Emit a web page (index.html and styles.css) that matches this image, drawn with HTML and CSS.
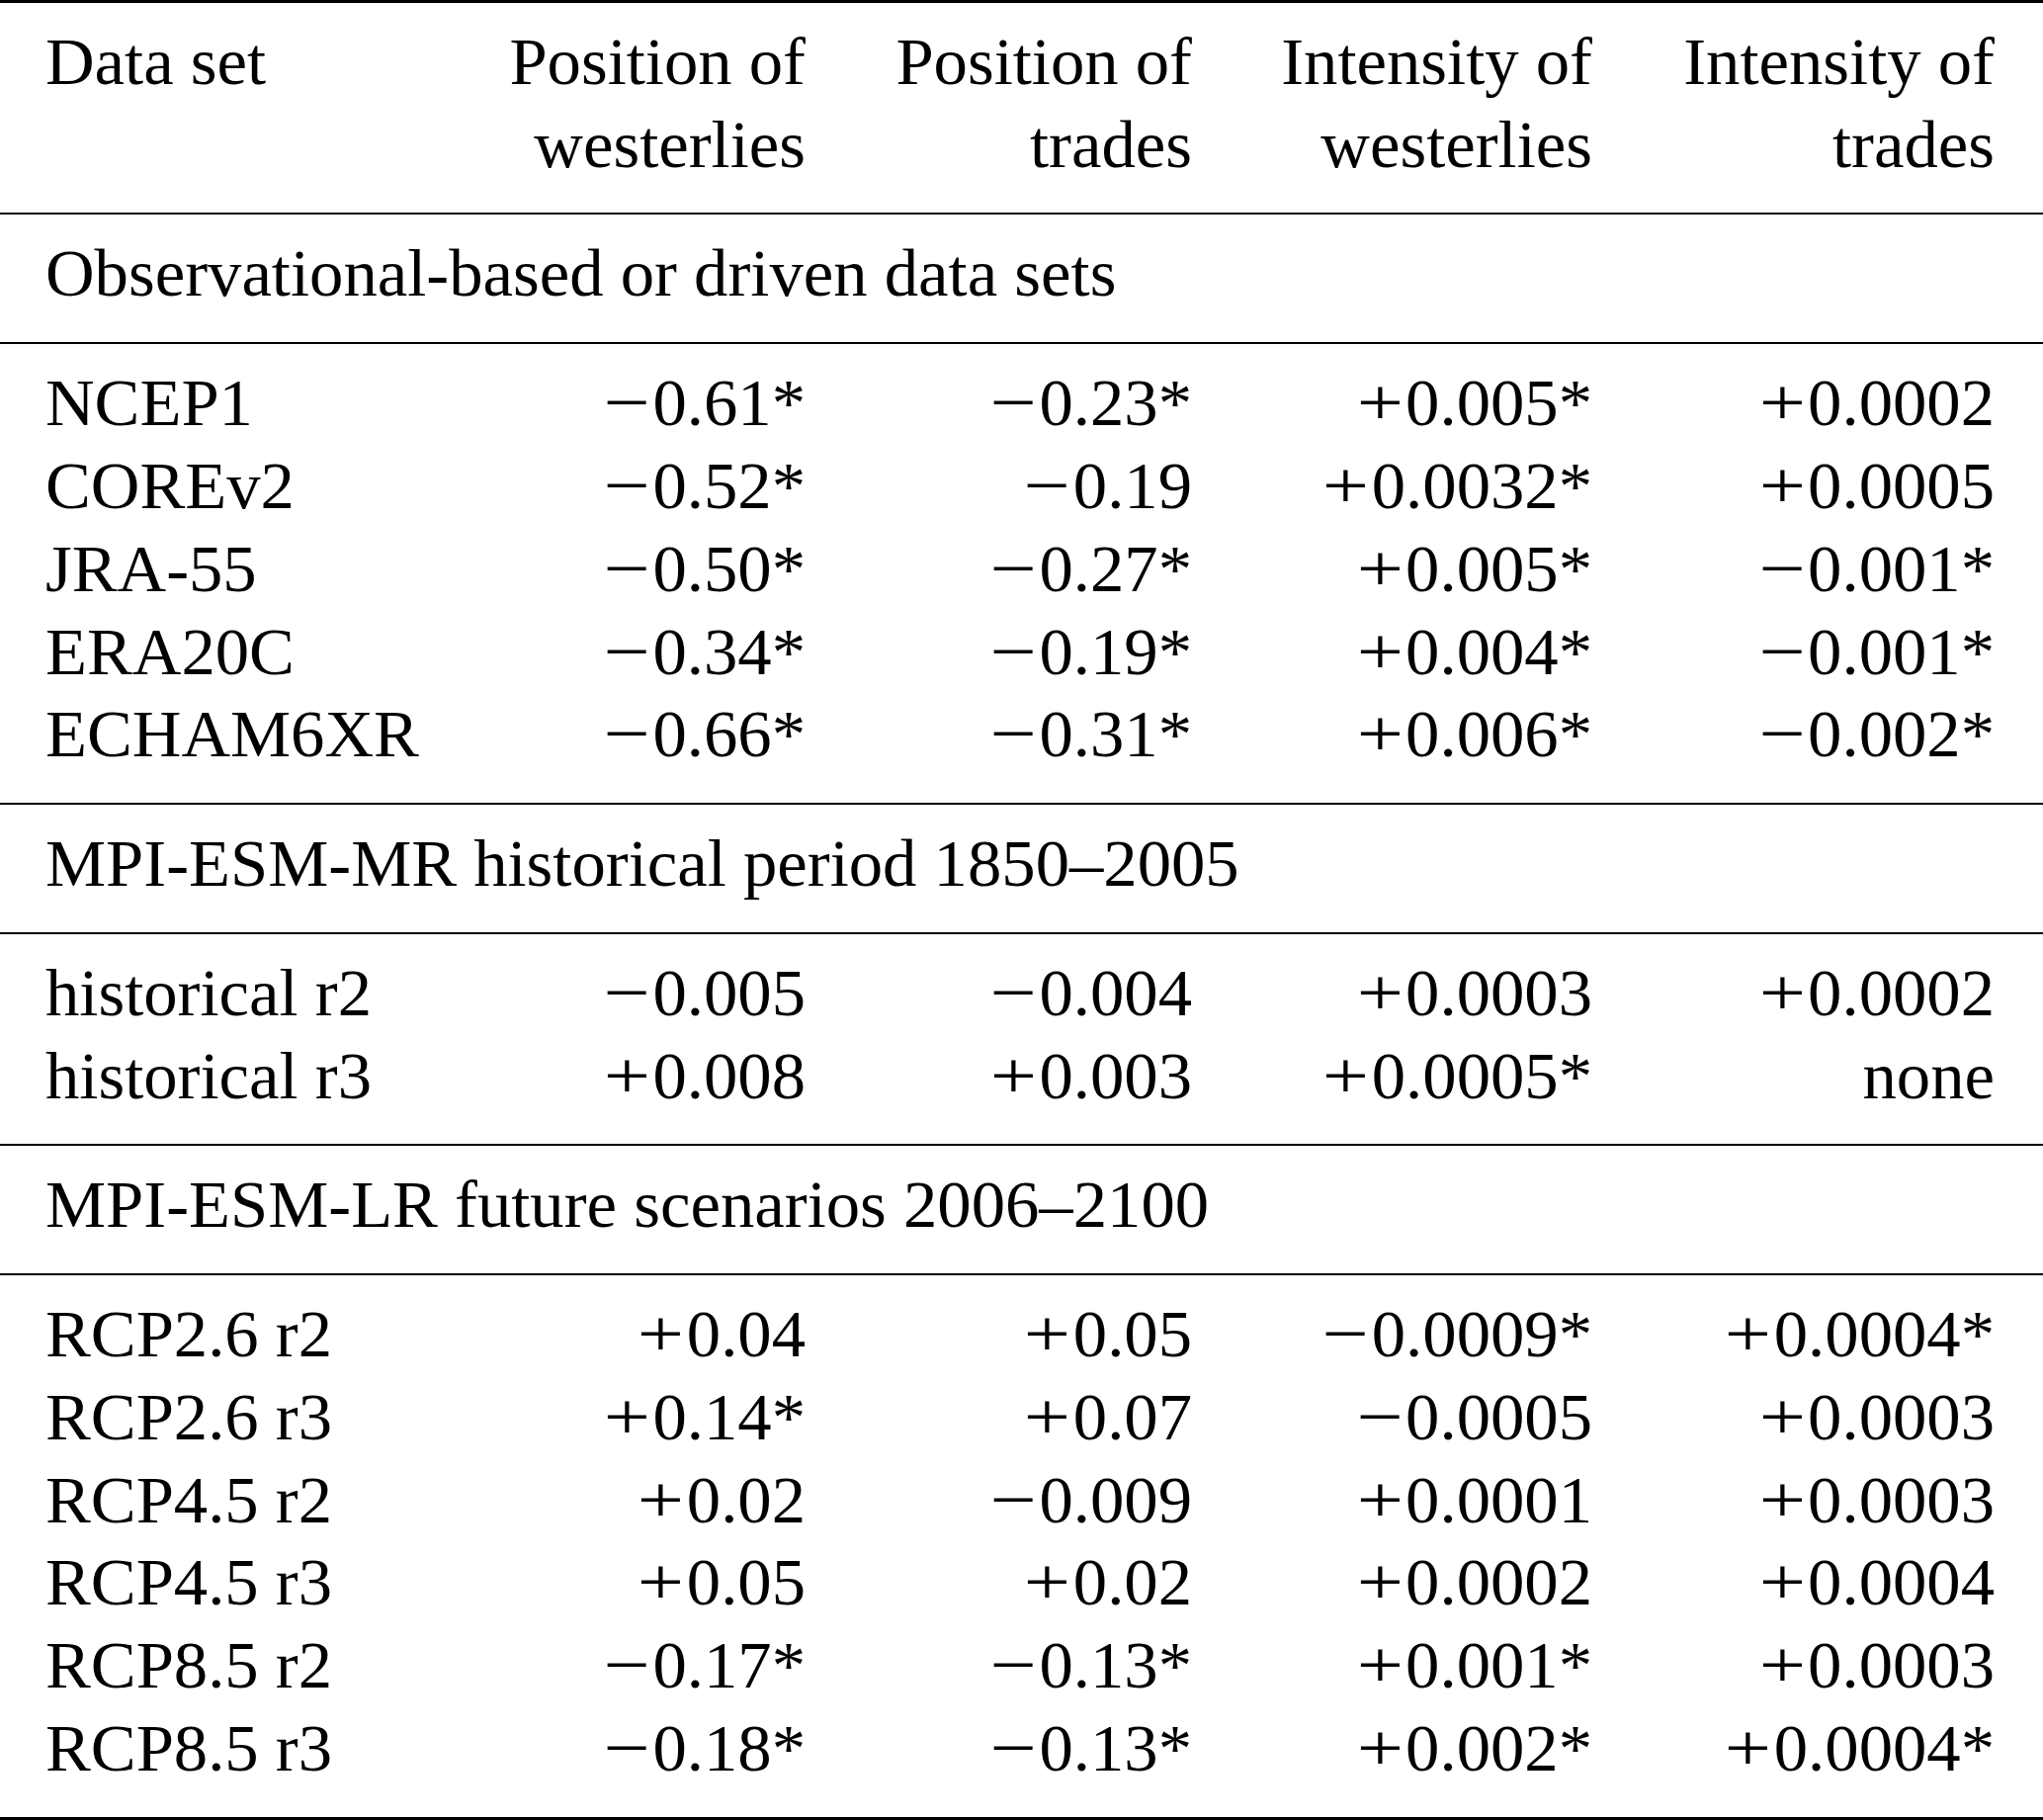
FILE: index.html
```html
<!DOCTYPE html>
<html lang="en">
<head>
<meta charset="utf-8">
<title>Trends of westerlies and trades</title>
<link rel="stylesheet" href="styles.css">
</head>
<body>
<div class="tbl">
  <div class="blk grid head">
    <div class="cell">Data set</div>
    <div class="cell num">Position of<br>westerlies</div>
    <div class="cell num">Position of<br>trades</div>
    <div class="cell num">Intensity of<br>westerlies</div>
    <div class="cell num">Intensity of<br>trades</div>
  </div>
  <div class="blk sec">Observational-based or driven data sets</div>
  <div class="blk grid">
    <div>NCEP1</div><div class="num"><span class="sg">−</span>0.61*</div><div class="num"><span class="sg">−</span>0.23*</div><div class="num"><span class="sg">+</span>0.005*</div><div class="num"><span class="sg">+</span>0.0002</div>
    <div>COREv2</div><div class="num"><span class="sg">−</span>0.52*</div><div class="num"><span class="sg">−</span>0.19</div><div class="num"><span class="sg">+</span>0.0032*</div><div class="num"><span class="sg">+</span>0.0005</div>
    <div>JRA-55</div><div class="num"><span class="sg">−</span>0.50*</div><div class="num"><span class="sg">−</span>0.27*</div><div class="num"><span class="sg">+</span>0.005*</div><div class="num"><span class="sg">−</span>0.001*</div>
    <div>ERA20C</div><div class="num"><span class="sg">−</span>0.34*</div><div class="num"><span class="sg">−</span>0.19*</div><div class="num"><span class="sg">+</span>0.004*</div><div class="num"><span class="sg">−</span>0.001*</div>
    <div>ECHAM6XR</div><div class="num"><span class="sg">−</span>0.66*</div><div class="num"><span class="sg">−</span>0.31*</div><div class="num"><span class="sg">+</span>0.006*</div><div class="num"><span class="sg">−</span>0.002*</div>
  </div>
  <div class="blk sec">MPI-ESM-MR historical period 1850–2005</div>
  <div class="blk grid">
    <div>historical r2</div><div class="num"><span class="sg">−</span>0.005</div><div class="num"><span class="sg">−</span>0.004</div><div class="num"><span class="sg">+</span>0.0003</div><div class="num"><span class="sg">+</span>0.0002</div>
    <div>historical r3</div><div class="num"><span class="sg">+</span>0.008</div><div class="num"><span class="sg">+</span>0.003</div><div class="num"><span class="sg">+</span>0.0005*</div><div class="num">none</div>
  </div>
  <div class="blk sec">MPI-ESM-LR future scenarios 2006–2100</div>
  <div class="blk grid">
    <div>RCP2.6 r2</div><div class="num"><span class="sg">+</span>0.04</div><div class="num"><span class="sg">+</span>0.05</div><div class="num"><span class="sg">−</span>0.0009*</div><div class="num"><span class="sg">+</span>0.0004*</div>
    <div>RCP2.6 r3</div><div class="num"><span class="sg">+</span>0.14*</div><div class="num"><span class="sg">+</span>0.07</div><div class="num"><span class="sg">−</span>0.0005</div><div class="num"><span class="sg">+</span>0.0003</div>
    <div>RCP4.5 r2</div><div class="num"><span class="sg">+</span>0.02</div><div class="num"><span class="sg">−</span>0.009</div><div class="num"><span class="sg">+</span>0.0001</div><div class="num"><span class="sg">+</span>0.0003</div>
    <div>RCP4.5 r3</div><div class="num"><span class="sg">+</span>0.05</div><div class="num"><span class="sg">+</span>0.02</div><div class="num"><span class="sg">+</span>0.0002</div><div class="num"><span class="sg">+</span>0.0004</div>
    <div>RCP8.5 r2</div><div class="num"><span class="sg">−</span>0.17*</div><div class="num"><span class="sg">−</span>0.13*</div><div class="num"><span class="sg">+</span>0.001*</div><div class="num"><span class="sg">+</span>0.0003</div>
    <div>RCP8.5 r3</div><div class="num"><span class="sg">−</span>0.18*</div><div class="num"><span class="sg">−</span>0.13*</div><div class="num"><span class="sg">+</span>0.002*</div><div class="num"><span class="sg">+</span>0.0004*</div>
  </div>
</div>
</body>
</html>
```
FILE: styles.css
```css
html, body {
  margin: 0;
  padding: 0;
  background: #fff;
}

.tbl {
  width: 2067px;
  border-top: 3px solid #000;
  border-bottom: 3px solid #000;
  font-family: "Liberation Serif", "Times New Roman", serif;
  font-size: 68.7px;
  line-height: 83.8px;
  color: #000;
}

.blk {
  padding: 18px 49px 26.9px 46px;
}

.blk + .blk {
  border-top: 2px solid #000;
}

.grid {
  display: grid;
  grid-template-columns: 400px 369px 391px 405px 407px;
}

.num {
  text-align: right;
  white-space: nowrap;
}

.sg {
  display: inline-block;
  transform: scaleX(1.22);
  margin-right: 0.1em;
}

.sec {
  white-space: nowrap;
}
```
